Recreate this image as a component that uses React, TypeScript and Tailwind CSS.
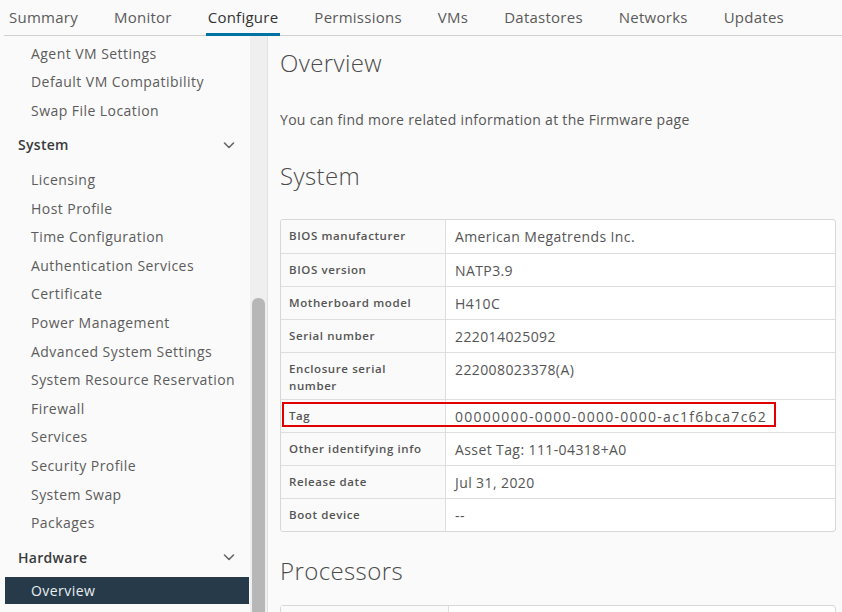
import React from 'react';

const tabs = ['Summary', 'Monitor', 'Configure', 'Permissions', 'VMs', 'Datastores', 'Networks', 'Updates'];

const topItems = ['Agent VM Settings', 'Default VM Compatibility', 'Swap File Location'];
const systemItems = [
  'Licensing',
  'Host Profile',
  'Time Configuration',
  'Authentication Services',
  'Certificate',
  'Power Management',
  'Advanced System Settings',
  'System Resource Reservation',
  'Firewall',
  'Services',
  'Security Profile',
  'System Swap',
  'Packages',
];

const rows: { label: string; value: string; tall?: boolean; marked?: boolean }[] = [
  { label: 'BIOS manufacturer', value: 'American Megatrends Inc.' },
  { label: 'BIOS version', value: 'NATP3.9' },
  { label: 'Motherboard model', value: 'H410C' },
  { label: 'Serial number', value: '222014025092' },
  { label: 'Enclosure serial number', value: '222008023378(A)', tall: true },
  { label: 'Tag', value: '00000000-0000-0000-0000-ac1f6bca7c62', marked: true },
  { label: 'Other identifying info', value: 'Asset Tag: 111-04318+A0' },
  { label: 'Release date', value: 'Jul 31, 2020' },
  { label: 'Boot device', value: '--' },
];

function Chevron() {
  return (
    <svg width="14" height="14" viewBox="0 0 14 14" fill="none" stroke="#666" strokeWidth="1.6" strokeLinecap="round" strokeLinejoin="round">
      <path d="M2.5 5l4.5 4.5L11.5 5" />
    </svg>
  );
}

function NavItem({ text }: { text: string }) {
  return <div className="h-[28.6px] flex items-center pl-[31px] text-[14px] tracking-[0.45px] text-[#5c5c5c] whitespace-nowrap">{text}</div>;
}

function Section({ title }: { title: string }) {
  return (
    <div className="h-[40.4px] flex items-center justify-between pl-[18px] pr-[14px] text-[14px] tracking-[0.3px] font-semibold text-[#3a3a3a]">
      <span>{title}</span>
      <Chevron />
    </div>
  );
}

export default function App() {
  return (
    <div className="w-[842px] h-[612px] overflow-hidden bg-[#fafafa] flex flex-col" style={{ fontFamily: '"Open Sans", "Liberation Sans", sans-serif' }}>
      {/* Tabs */}
      <div className="h-[36px] shrink-0 flex items-end pl-[3px] gap-[32px] border-b border-[#cfcfcf] ml-[4px] text-[15px] tracking-[0.25px] text-[#5a5a5a]">
        {tabs.map(t => (
          <div
            key={t}
            className={`h-[36px] flex items-center px-[2px] pt-[1px] border-b-[3px] -mb-px ${t === 'Configure' ? 'border-[#0072a3] text-[#333]' : 'border-transparent'}`}
          >
            {t}
          </div>
        ))}
      </div>

      <div className="flex flex-1 min-h-0">
        {/* Sidebar */}
        <div className="w-[250px] shrink-0 pt-[3px]">
          {topItems.map(t => <NavItem key={t} text={t} />)}
          <Section title="System" />
          {systemItems.map(t => <NavItem key={t} text={t} />)}
          <Section title="Hardware" />
          <div className="ml-[5px] mr-px h-[27px] bg-[#263a49] flex items-center pl-[26px] text-[14px] tracking-[0.45px] text-[#e8eef3]">Overview</div>
        </div>

        {/* Scrollbar */}
        <div className="w-[18px] shrink-0 bg-[#efefef] border-r border-[#e2e2e2] flex flex-col pt-[262px] px-[2px]">
          <div className="flex-1 bg-[#b7b7b7] rounded-t-[6px]" />
        </div>

        {/* Main */}
        <div className="flex-1 min-w-0 pl-[12px] pr-[6px] text-[#565656]">
          <h1 className="mt-[11px] text-[24px] font-light tracking-[0.4px] leading-[32px] text-[#4a4a4a]">Overview</h1>
          <p className="mt-[31px] text-[14px] tracking-[0.3px] leading-[20px]">You can find more related information at the Firmware page</p>
          <h2 className="mt-[30px] text-[24px] font-light tracking-[0.4px] leading-[32px] text-[#4a4a4a]">System</h2>

          <div className="mt-[27px] border border-[#d7d7d7] rounded-[3px] bg-white overflow-hidden">
            {rows.map((r, i) => (
              <div key={r.label} className={`relative flex ${i > 0 ? 'border-t border-[#dedede]' : ''} ${r.tall ? 'h-[47px]' : 'h-[33px]'}`}>
                <div className="w-[165px] shrink-0 bg-[#fafafa] border-r border-[#dedede] pl-[8px] pr-[6px] pt-[7px] text-[11.5px] tracking-[0.6px] font-semibold leading-[17px] text-[#555]">
                  {r.label === 'Enclosure serial number' ? (<>Enclosure serial<br />number</>) : r.label}
                </div>
                <div className={`pl-[9px] pt-[7px] text-[14px] leading-[20px] text-[#555] whitespace-nowrap ${r.marked ? 'tracking-[1.25px]' : 'tracking-[0.4px]'}`}>{r.value}</div>
                {r.marked && <div className="absolute left-[1px] top-[2px] w-[494px] h-[25px] border-2 border-[#e00000]" />}
              </div>
            ))}
          </div>

          <h2 className="mt-[23px] text-[24px] font-light tracking-[0.4px] leading-[32px] text-[#4a4a4a]">Processors</h2>
          <div className="mt-[18px] h-[40px] border border-[#d7d7d7] rounded-[3px] bg-white flex">
            <div className="w-[168px] bg-[#fafafa] border-r border-[#dedede]" />
          </div>
        </div>
      </div>
    </div>
  );
}
